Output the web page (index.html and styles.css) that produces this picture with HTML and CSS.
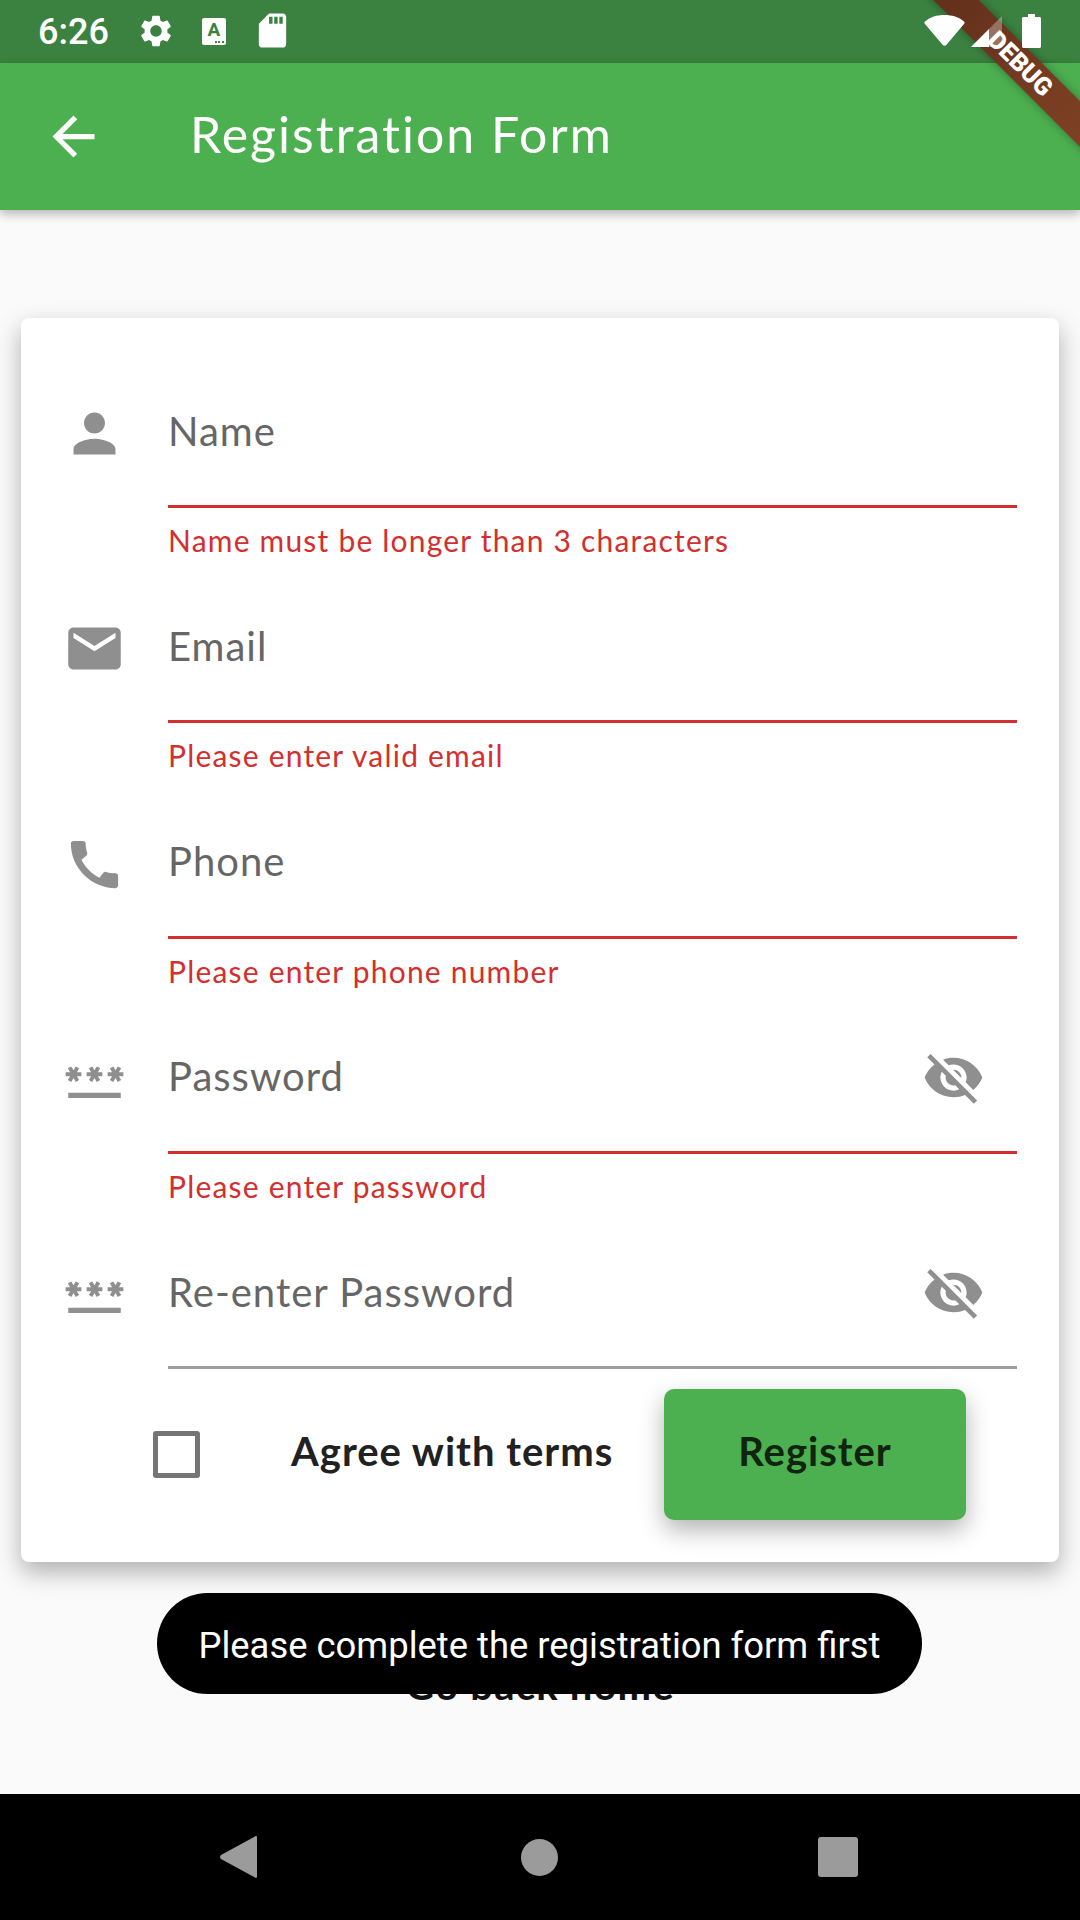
FILE: index.html
```html
<!DOCTYPE html>
<html lang="en">
<head>
<meta charset="UTF-8" />
<title>Registration Form</title>
<link rel="stylesheet" href="styles.css">
</head>
<body>

<div class="status-bar">
  <span class="clock">6:26</span>
  <svg class="st-gear" viewBox="0 0 24 24"><path d="M19.14 12.94c.04-.3.06-.61.06-.94 0-.32-.02-.64-.07-.94l2.03-1.58c.18-.14.23-.41.12-.61l-1.92-3.32c-.12-.22-.37-.29-.59-.22l-2.39.96c-.5-.38-1.03-.7-1.62-.94l-.36-2.54c-.04-.24-.24-.41-.48-.41h-3.84c-.24 0-.43.17-.47.41l-.36 2.54c-.59.24-1.13.57-1.62.94l-2.39-.96c-.22-.08-.47 0-.59.22L2.74 8.87c-.12.21-.08.47.12.61l2.03 1.58c-.05.3-.09.63-.09.94s.02.64.07.94l-2.03 1.58c-.18.14-.23.41-.12.61l1.92 3.32c.12.22.37.29.59.22l2.39-.96c.5.38 1.03.7 1.62.94l.36 2.54c.05.24.24.41.48.41h3.84c.24 0 .44-.17.47-.41l.36-2.54c.59-.24 1.13-.56 1.62-.94l2.39.96c.22.08.47 0 .59-.22l1.92-3.32c.12-.22.07-.47-.12-.61l-2.01-1.58zM12 15.6c-1.98 0-3.6-1.62-3.6-3.6s1.62-3.6 3.6-3.6 3.6 1.62 3.6 3.6-1.62 3.6-3.6 3.6z"/></svg>
  <span class="st-a">A<i class="st-dots"></i></span>
  <svg class="st-sd" viewBox="0 0 24 24"><path d="M18 2h-8L4.02 8 4 20c0 1.1.9 2 2 2h12c1.1 0 2-.9 2-2V4c0-1.1-.9-2-2-2zm-6 6h-2V4h2v4zm3 0h-2V4h2v4zm3 0h-2V4h2v4z"/></svg>
  <svg class="st-wifi" viewBox="0 0 41 32"><path d="M1 7.5C6 3 13 1 20.500 1S35 3 40 7.500c.8.700.8 1.500.2 2.300L22.500 30.800c-1 1.200-3 1.200-4 0L.8 9.800C.2 9 .2 8.200 1 7.500z"/></svg>
  <svg class="st-signal" viewBox="0 0 31 31"><path class="faded" d="M31 0v31H0z"/><path d="M18 13v18H0z"/></svg>
  <svg class="st-battery" viewBox="0 0 19 34"><path d="M6 0h7v3h4.500c.8 0 1.500.7 1.500 1.500v28c0 .8-.7 1.500-1.500 1.500h-16C.7 34 0 33.300 0 32.500v-28C0 3.700.7 3 1.500 3H6z"/></svg>
</div>

<header class="app-bar">
  <svg class="icon back" viewBox="0 0 24 24"><path d="M20 11H7.830l5.590-5.590L12 4l-8 8 8 8 1.410-1.410L7.830 13H20v-2z"/></svg>
  <h1>Registration Form</h1>
</header>

<main class="content">
  <form class="card">
    <div class="field">
      <svg class="icon" viewBox="0 0 24 24"><path d="M12 12c2.210 0 4-1.790 4-4s-1.790-4-4-4-4 1.790-4 4 1.790 4 4 4zm0 2c-2.670 0-8 1.340-8 4v2h16v-2c0-2.660-5.330-4-8-4z"/></svg>
      <div class="field-body">
        <div class="input invalid"><span class="label">Name</span></div>
        <div class="error">Name must be longer than 3 characters</div>
      </div>
    </div>
    <div class="field">
      <svg class="icon" viewBox="0 0 24 24"><path d="M20 4H4c-1.100 0-1.990.9-1.990 2L2 18c0 1.100.9 2 2 2h16c1.100 0 2-.9 2-2V6c0-1.100-.9-2-2-2zm0 4l-8 5-8-5V6l8 5 8-5v2z"/></svg>
      <div class="field-body">
        <div class="input invalid"><span class="label">Email</span></div>
        <div class="error">Please enter valid email</div>
      </div>
    </div>
    <div class="field">
      <svg class="icon" viewBox="0 0 24 24"><path d="M20.010 15.380c-1.230 0-2.420-.2-3.530-.56-.35-.12-.74-.03-1.010.24l-1.570 1.970c-2.830-1.350-5.480-3.900-6.890-6.830l1.950-1.660c.27-.28.35-.67.24-1.020-.37-1.110-.56-2.300-.56-3.530 0-.54-.45-.99-.99-.99H4.190C3.650 3 3 3.240 3 3.990 3 13.280 10.730 21 20.010 21c.71 0 .99-.63.99-1.180v-3.450c0-.54-.45-.99-.99-.99z"/></svg>
      <div class="field-body">
        <div class="input invalid"><span class="label">Phone</span></div>
        <div class="error">Please enter phone number</div>
      </div>
    </div>
    <div class="field">
      <svg class="icon" viewBox="0 0 24 24"><path d="M2 17h20v2H2v-2zm1.150-4.050L4 11.470l.85 1.480 1.300-.75-.85-1.480H7v-1.500H5.300l.85-1.470L4.850 7 4 8.470 3.150 7l-1.300.75.85 1.470H1v1.500h1.700l-.85 1.480 1.300.75zm6.700-.75l1.300.75.85-1.480.85 1.480 1.300-.75-.85-1.480H15v-1.500h-1.700l.85-1.470-1.300-.75L12 8.470 11.150 7l-1.300.75.85 1.470H9v1.500h1.700l-.85 1.480zM23 9.220h-1.700l.85-1.470-1.300-.75L20 8.470 19.150 7l-1.300.75.85 1.470H17v1.500h1.700l-.85 1.480 1.300.75.85-1.480.85 1.480 1.300-.75-.85-1.480H23v-1.500z"/></svg>
      <div class="field-body">
        <div class="input invalid">
          <span class="label">Password</span>
          <svg class="icon" viewBox="0 0 24 24"><path d="M12 7c2.760 0 5 2.240 5 5 0 .65-.13 1.260-.36 1.830l2.920 2.920c1.510-1.260 2.700-2.890 3.430-4.750-1.730-4.390-6-7.500-11-7.500-1.400 0-2.740.25-3.980.7l2.160 2.160C10.740 7.130 11.350 7 12 7zM2 4.270l2.280 2.280.46.46C3.080 8.300 1.780 10.020 1 12c1.730 4.390 6 7.500 11 7.500 1.550 0 3.030-.3 4.380-.84l.42.42L19.730 22 21 20.730 3.270 3 2 4.270zM7.530 9.800l1.550 1.550c-.05.21-.08.43-.08.65 0 1.660 1.340 3 3 3 .22 0 .44-.03.65-.08l1.550 1.550c-.67.33-1.410.53-2.200.53-2.760 0-5-2.240-5-5 0-.79.2-1.530.53-2.200zm4.310-.78l3.150 3.150.02-.16c0-1.660-1.340-3-3-3l-.17.01z"/></svg>
        </div>
        <div class="error">Please enter password</div>
      </div>
    </div>
    <div class="field">
      <svg class="icon" viewBox="0 0 24 24"><path d="M2 17h20v2H2v-2zm1.150-4.050L4 11.470l.85 1.480 1.300-.75-.85-1.480H7v-1.500H5.300l.85-1.470L4.850 7 4 8.470 3.150 7l-1.300.75.85 1.470H1v1.500h1.700l-.85 1.480 1.300.75zm6.700-.75l1.300.75.85-1.480.85 1.480 1.300-.75-.85-1.480H15v-1.500h-1.700l.85-1.470-1.300-.75L12 8.470 11.150 7l-1.300.75.85 1.470H9v1.500h1.700l-.85 1.480zM23 9.220h-1.700l.85-1.470-1.300-.75L20 8.470 19.150 7l-1.300.75.85 1.470H17v1.500h1.700l-.85 1.480 1.300.75.85-1.480.85 1.480 1.300-.75-.85-1.480H23v-1.500z"/></svg>
      <div class="field-body">
        <div class="input"><span class="label">Re-enter Password</span>
          <svg class="icon" viewBox="0 0 24 24"><path d="M12 7c2.760 0 5 2.240 5 5 0 .65-.13 1.260-.36 1.830l2.920 2.920c1.510-1.260 2.700-2.890 3.430-4.750-1.730-4.390-6-7.500-11-7.500-1.400 0-2.740.25-3.980.7l2.160 2.160C10.740 7.130 11.350 7 12 7zM2 4.270l2.280 2.280.46.46C3.080 8.300 1.780 10.020 1 12c1.730 4.390 6 7.500 11 7.500 1.550 0 3.030-.3 4.380-.84l.42.42L19.730 22 21 20.730 3.270 3 2 4.270zM7.530 9.800l1.550 1.550c-.05.21-.08.43-.08.65 0 1.660 1.340 3 3 3 .22 0 .44-.03.65-.08l1.550 1.550c-.67.33-1.410.53-2.200.53-2.760 0-5-2.240-5-5 0-.79.2-1.530.53-2.200zm4.310-.78l3.150 3.150.02-.16c0-1.660-1.340-3-3-3l-.17.01z"/></svg>
        </div>
      </div>
    </div>
    <div class="actions">
      <span class="checkbox"></span>
      <span class="agree">Agree with terms</span>
      <button type="button" class="register">Register</button>
    </div>
  </form>
  <p class="go-back">Go back home</p>
</main>

<nav class="nav-bar">
  <svg class="nav-back" viewBox="0 0 37 42"><path d="M35 .5c1-.8 2-.3 2 1v39c0 1.300-1 1.800-2 1L1 23c-1.300-1-1.300-3 0-4z"/></svg>
  <span class="nav-home"></span>
  <span class="nav-recent"></span>
</nav>

<div class="toast">Please complete the registration form first</div>
<div class="banner-corner"><div class="debug-banner">DEBUG</div></div>

</body>
</html>
```

FILE: styles.css
```css
* {
  box-sizing: border-box;
}
html, body {
  margin: 0;
  height: 100%;
}
body {
  position: relative;
  width: 1080px;
  height: 1920px;
  overflow: hidden;
  display: flex;
  flex-direction: column;
  background: #fafafa;
  font-family: Lato, sans-serif;
}

/* status bar, its icons sit over the debug banner */
.status-bar {
  height: 63px;
  flex: none;
  display: flex;
  align-items: center;
  background: #3b8240;
  fill: #fff;
  color: #fff;
}
.status-bar > * {
  position: relative;
  z-index: 6;
}
.clock {
  margin-left: 38px;
  font: 500 36px Roboto, sans-serif;
}
.st-gear {
  width: 38px;
  height: 38px;
  margin-left: 28px;
  margin-top: -2px;
}
.st-a {
  width: 24px;
  height: 27px;
  margin-left: 27px;
  margin-top: -1px;
  padding-top: 1px;
  border-radius: 2px;
  background: #fff;
  color: #3b8240;
  font: 700 19px/22px Roboto, sans-serif;
  text-align: center;
}
.st-dots {
  position: absolute;
  right: 2px;
  bottom: 2px;
  width: 9px;
  height: 2px;
  background: repeating-linear-gradient(90deg, #3b8240 0 2px, transparent 2px 3.500px);
}
.st-sd {
  width: 41px;
  height: 41px;
  margin-left: 26px;
  margin-top: -3px;
}
.st-wifi {
  width: 41px;
  height: 32px;
  margin-left: auto;
  margin-top: -3px;
}
.st-signal {
  width: 31px;
  height: 31px;
  margin-left: 6px;
  margin-top: 0;
}
.st-signal .faded {
  opacity: 0.3;
}
.st-battery {
  width: 19px;
  height: 34px;
  margin-left: 20px;
  margin-right: 39px;
  margin-top: -1px;
}

/* app bar */
.app-bar {
  position: relative;
  z-index: 2;
  height: 147px;
  flex: none;
  display: flex;
  align-items: center;
  background: #4caf50;
  box-shadow: 0 4px 10px rgba(0, 0, 0, 0.28);
  fill: #fff;
}
.icon {
  width: 63px;
  height: 63px;
  flex: none;
  fill: #8f8f8f;
}
.back {
  margin-left: 42px;
  fill: #fff;
}
.app-bar h1 {
  margin: 0 0 5px 85px;
  color: #fff;
  font-size: 50px;
  font-weight: 400;
  letter-spacing: 2px;
}

/* form card */
.content {
  flex: 1;
  padding-top: 108px;
}
.card {
  margin: 0 21px;
  padding-top: 36px;
  border-radius: 8px;
  background: #fff;
  box-shadow: 0 10px 24px rgba(0, 0, 0, 0.3);
}
.field {
  display: flex;
}
.field > .icon {
  margin: 48px 42px 0;
}
.field-body {
  width: 849px;
}
.input {
  height: 154px;
  padding-top: 4px;
  padding-right: 32px;
  display: flex;
  align-items: center;
  justify-content: space-between;
  border-bottom: 3px solid #9e9e9e;
}
.input.invalid {
  border-bottom-color: #d32f2f;
}
.label {
  margin-bottom: 2px;
  color: #666;
  font-size: 40px;
  letter-spacing: 1px;
}
.error {
  height: 61.250px;
  padding-top: 12px;
  color: #d32f2f;
  font-size: 30px;
  line-height: 40px;
  letter-spacing: 1.200px;
}
.actions {
  display: flex;
  align-items: center;
  padding: 20px 93px 42px 132px;
}
.checkbox {
  width: 47px;
  height: 47px;
  border: 5px solid #757575;
  border-radius: 3px;
}
.agree {
  margin-left: 91px;
  margin-bottom: 8px;
  color: #212121;
  font-size: 40px;
  font-weight: 700;
  letter-spacing: 1px;
}
.register {
  width: 302px;
  height: 131px;
  margin-left: auto;
  padding-bottom: 8px;
  border: none;
  border-radius: 10px;
  background: #4caf50;
  box-shadow: 0 10px 24px rgba(0, 0, 0, 0.3);
  color: #10240f;
  font-family: Lato, sans-serif;
  font-size: 40px;
  font-weight: 700;
  letter-spacing: 1px;
}

/* text under the toast */
.go-back {
  margin: 100px 0 0;
  color: #111;
  font-size: 40px;
  font-weight: 700;
  line-height: 46px;
  letter-spacing: 1.200px;
  text-align: center;
}

/* android navigation */
.nav-bar {
  height: 126px;
  flex: none;
  display: flex;
  align-items: center;
  padding-left: 220px;
  background: #000;
}
.nav-back {
  width: 37px;
  height: 42px;
  fill: #9b9b9b;
}
.nav-home {
  width: 37px;
  height: 37px;
  margin-left: 264px;
  border-radius: 50%;
  background: #9b9b9b;
}
.nav-recent {
  width: 40px;
  height: 40px;
  margin-left: 260px;
  border-radius: 3px;
  background: #9b9b9b;
}

/* overlays */
.toast {
  position: absolute;
  left: 157px;
  top: 1593px;
  width: 765px;
  height: 101px;
  padding-top: 4px;
  border-radius: 51px;
  background: #000;
  color: #fff;
  font: 400 36.400px/97px Roboto, sans-serif;
  text-align: center;
}
.banner-corner {
  position: absolute;
  right: 0;
  top: 0;
  z-index: 5;
  width: 210px;
  height: 210px;
  overflow: hidden;
}
.debug-banner {
  position: absolute;
  left: 0;
  top: 48px;
  width: 300px;
  height: 32px;
  transform: rotate(45deg);
  background: linear-gradient(90deg, rgba(96, 38, 22, 0.92), rgba(136, 62, 36, 0.95));
  box-shadow: 0 0 10px rgba(0, 0, 0, 0.35);
  color: #fff;
  font: 900 25px/32px Roboto, sans-serif;
  text-align: center;
}
```
